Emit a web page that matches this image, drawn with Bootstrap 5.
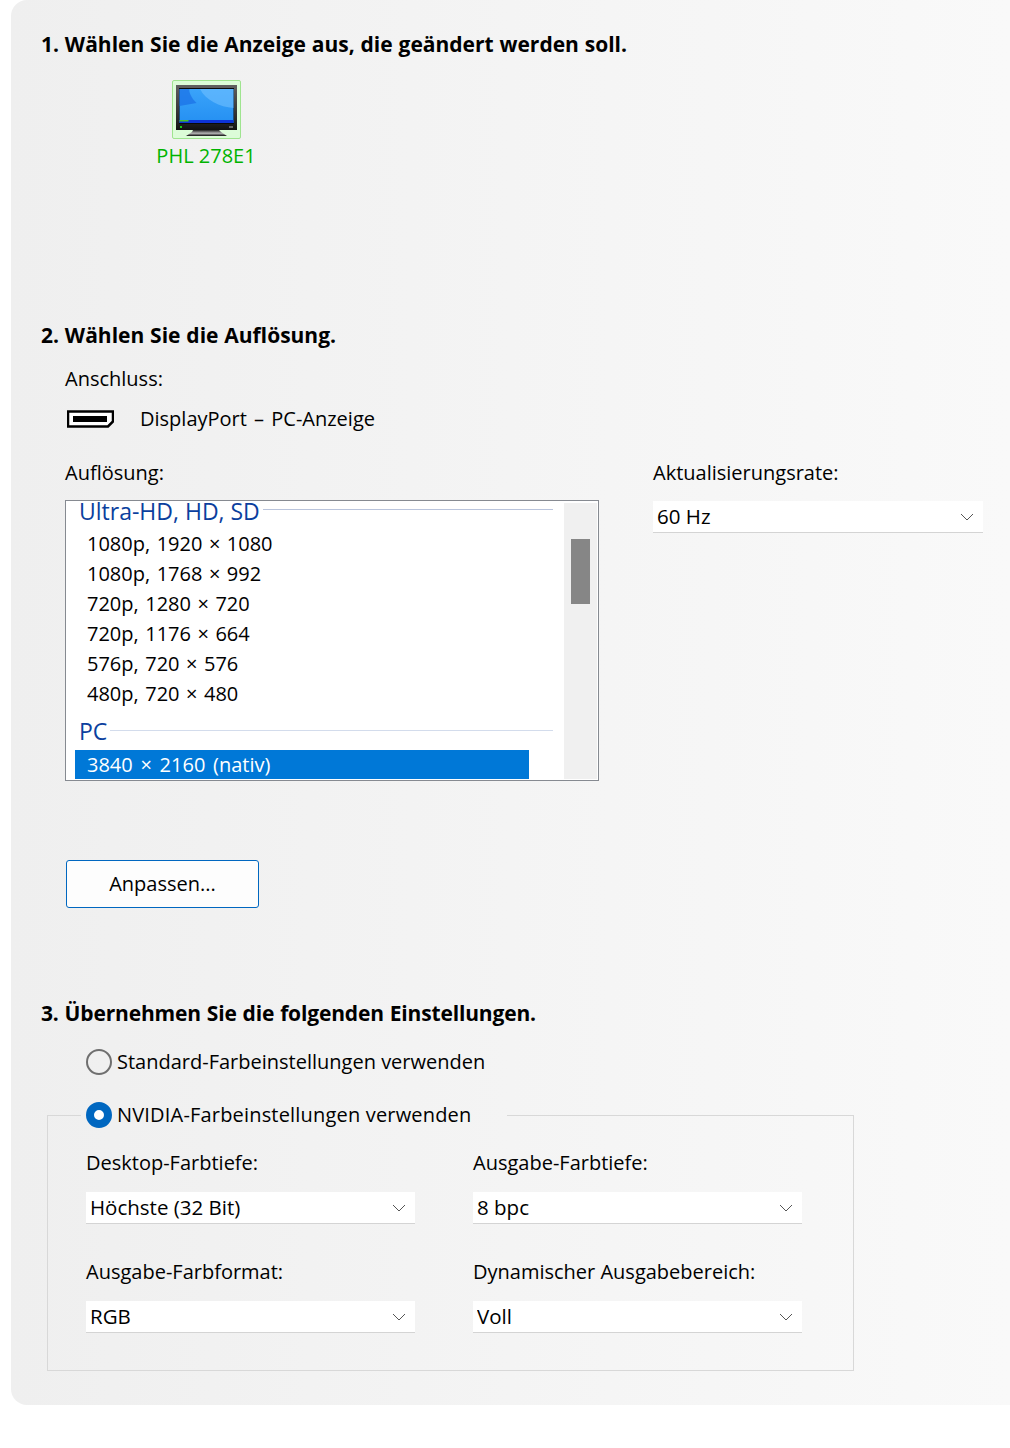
<!DOCTYPE html>
<html lang="de">
<head>
<meta charset="utf-8">
<title>Auflösung ändern</title>
<link href="https://cdn.jsdelivr.net/npm/bootstrap@5.3.0/dist/css/bootstrap.min.css" rel="stylesheet">
<style>
:root { --ink:#000; }
html, body { background:#fff; }
body { font-family:"Open Sans","Noto Sans","Liberation Sans",sans-serif; font-size:20px; color:var(--ink); min-height:1448px; }
.pane { margin-left:11px; height:1405px; padding:29px 0 0 30px; border-radius:16px 0 0 16px; background:linear-gradient(to right,#efefef,#f9f9f9); }
.step-title { font-size:21px; font-weight:700; line-height:30px; margin:0; word-spacing:.4px; }
.step-title.tight { letter-spacing:-.16px; word-spacing:.6px; }
.tile-wrap { width:100px; margin:21px 0 0 115px; text-align:center; }
.tile { width:69px; height:59px; margin:0 auto; border:1px solid #9fe48f; border-radius:2px; background:#dcfcd8; display:flex; justify-content:center; }
.tile svg { display:block; margin-top:4px; }
.tile-name { color:#00b400; line-height:30px; margin-top:2px; white-space:nowrap; }
.s2 { margin-top:149px; }
.indent { margin-left:24px; }
.lbl { line-height:30px; }
.port-head { margin-top:14px; }
.port { height:30px; margin-top:10px; }
.port svg { margin:0 26px 0 2px; }
.port span { word-spacing:2px; }
.columns { margin-top:24px; }
.res-col { width:534px; margin-right:54px; }
.rate-col { width:330px; }
.listbox { height:281px; margin-top:12px; background:#fff; border:1px solid #868a91; position:relative; }
.group-row { height:20px; line-height:20px; font-size:23px; color:#0b3f9e; padding-left:13px; display:flex; align-items:center; gap:3px; width:487px; }
.group-row::after { content:""; flex:1; height:1px; margin-bottom:4px; background:#b9c4dc; }
.opt { height:30px; line-height:30px; padding-left:21px; white-space:nowrap; word-spacing:1.300px; }
.opt-list { padding-top:8px; }
.pc-row { margin-top:12px; }
.pc-row::after { margin-bottom:2px; background:#d3dcec; }
.sel-row { background:#0078d7; color:#fff; width:454px; margin-left:9px; padding-left:12px; height:29px; line-height:29px; margin-top:9px; word-spacing:2.500px; }
.sbar { position:absolute; top:2px; bottom:1px; right:1px; width:33px; background:#f0f0f0; }
.sthumb { position:absolute; left:7px; top:36px; width:19px; height:65px; background:#868686; }
.win-select { height:32px; padding:0 0 0 4px; margin-top:13px; border:0; border-bottom:1px solid #d4d4d4; border-radius:0; font-size:20.5px; color:var(--ink); line-height:31px;
  background-color:#fff; background-position:right 9px center; background-size:14px 8px; background-repeat:no-repeat;
  background-image:url("data:image/svg+xml,%3csvg xmlns='http://www.w3.org/2000/svg' viewBox='0 0 14 8'%3e%3cpath fill='none' stroke='%23555' stroke-width='1' d='M1 1l6 6 6-6'/%3e%3c/svg%3e"); }
.win-select:focus { box-shadow:none; }
.adjust { width:193px; height:48px; margin:79px 0 0 1px; padding:0; display:block; font-size:20px; color:var(--ink); background:#fdfdfd; border:1px solid #0067c0; border-radius:3px; }
.s3 { margin-top:90px; }
.radio-line { display:flex; align-items:center; gap:5px; line-height:26px; margin:0; }
.radio-line .form-check-input { width:26px; height:26px; margin:0; flex:none; background:transparent; border:2px solid #6f6f6f; }
.radio-line .form-check-input:checked { background:#fff; border:8px solid #0067c0; }
.first-radio { margin:21px 0 0 45px; }
.groupbox { width:807px; height:269px; margin:27px 0 0 6px; padding:0 0 0 38px; border:1px solid #d8d8d8; min-width:0; }
.groupbox legend { float:none; width:auto; margin:0 0 0 -5px; padding:0 36px 0 5px; font-size:20px; line-height:26px; }
.groupbox legend span { letter-spacing:.18px; }
.fields { gap:0 58px; display:grid; grid-template-columns:329px 329px; }
.fields .lbl { margin-top:20px; }
.fields .win-select { margin-top:14px; }
.cell + .cell + .cell .lbl { margin-top:33px; }
</style>
</head>
<body>
<main class="pane">
  <section>
    <h2 class="step-title">1. Wählen Sie die Anzeige aus, die geändert werden soll.</h2>
    <div class="tile-wrap">
      <div class="tile">
        <svg width="61" height="52" viewBox="0 0 61 52" aria-label="Monitor">
          <defs>
            <linearGradient id="sc" x1="0" y1="0" x2="0" y2="1"><stop offset="0" stop-color="#3aa3fa"/><stop offset="1" stop-color="#2590f2"/></linearGradient>
            <linearGradient id="bz" x1="0" y1="0" x2="0" y2="1"><stop offset="0" stop-color="#606060"/><stop offset=".75" stop-color="#2a2a2a"/><stop offset="1" stop-color="#101010"/></linearGradient>
            <linearGradient id="ft" x1="0" y1="0" x2="0" y2="1"><stop offset="0" stop-color="#222"/><stop offset=".55" stop-color="#b5b5b5"/><stop offset="1" stop-color="#0a0a0a"/></linearGradient>
          </defs>
          <rect x="0" y="0" width="61" height="45" fill="url(#bz)"/>
          <rect x="3" y="3" width="55" height="36" fill="#0a0a0a"/>
          <rect x="3.500" y="4" width="54" height="34" fill="url(#sc)"/>
          <path d="M3.500 4h10c-1 3 2 9 7 14l-17 3z" fill="#1a6fe6" opacity=".7"/>
          <path d="M24 4h33.500v19c-14-1-28-8-33.500-19z" fill="#6fc0ff" opacity=".6"/>
          <rect x="3.500" y="35" width="54" height="3" fill="#0d33d6"/>
          <rect x="3.500" y="35" width="9" height="1.500" fill="#49c02c"/>
          <rect x="4" y="41" width="2" height="2" fill="#19c819"/>
          <rect x="53" y="41" width="4" height="2" fill="#666"/>
          <path d="M17 45h26l2 2 6 4H10l6-4z" fill="url(#ft)"/>
        </svg>
      </div>
      <div class="tile-name">PHL 278E1</div>
    </div>
  </section>

  <section class="s2">
    <h2 class="step-title">2. Wählen Sie die Auflösung.</h2>
    <div class="indent">
      <div class="lbl port-head">Anschluss:</div>
      <div class="port d-flex align-items-center">
        <svg width="47" height="18" viewBox="0 0 47 18" aria-label="DisplayPort"><path d="M1 1.500h45v10l-5 5H1z" fill="#fff" stroke="#000" stroke-width="2.500"/><rect x="6" y="6" width="34" height="6" fill="#000"/></svg>
        <span>DisplayPort – PC-Anzeige</span>
      </div>
      <div class="columns d-flex">
        <div class="res-col">
          <div class="lbl">Auflösung:</div>
          <div class="listbox">
            <div class="group-row">Ultra-HD, HD, SD</div>
            <div class="opt-list">
              <div class="opt">1080p, 1920 × 1080</div>
              <div class="opt">1080p, 1768 × 992</div>
              <div class="opt">720p, 1280 × 720</div>
              <div class="opt">720p, 1176 × 664</div>
              <div class="opt">576p, 720 × 576</div>
              <div class="opt">480p, 720 × 480</div>
            </div>
            <div class="group-row pc-row">PC</div>
            <div class="sel-row">3840 × 2160 (nativ)</div>
            <div class="sbar"><div class="sthumb"></div></div>
          </div>
        </div>
        <div class="rate-col">
          <div class="lbl">Aktualisierungsrate:</div>
          <select class="form-select win-select" aria-label="Aktualisierungsrate"><option>60 Hz</option></select>
        </div>
      </div>
      <button type="button" class="btn adjust">Anpassen...</button>
    </div>
  </section>

  <section class="s3">
    <h2 class="step-title tight">3. Übernehmen Sie die folgenden Einstellungen.</h2>
    <label class="radio-line first-radio"><input class="form-check-input" type="radio" name="farbe"><span>Standard-Farbeinstellungen verwenden</span></label>
    <fieldset class="groupbox">
      <legend><label class="radio-line"><input class="form-check-input" type="radio" name="farbe" checked><span>NVIDIA-Farbeinstellungen verwenden</span></label></legend>
      <div class="fields">
        <div class="cell"><div class="lbl">Desktop-Farbtiefe:</div><select class="form-select win-select" aria-label="Desktop-Farbtiefe"><option>Höchste (32 Bit)</option></select></div>
        <div class="cell"><div class="lbl">Ausgabe-Farbtiefe:</div><select class="form-select win-select" aria-label="Ausgabe-Farbtiefe"><option>8 bpc</option></select></div>
        <div class="cell"><div class="lbl">Ausgabe-Farbformat:</div><select class="form-select win-select" aria-label="Ausgabe-Farbformat"><option>RGB</option></select></div>
        <div class="cell"><div class="lbl">Dynamischer Ausgabebereich:</div><select class="form-select win-select" aria-label="Dynamischer Ausgabebereich"><option>Voll</option></select></div>
      </div>
    </fieldset>
  </section>
</main>
<script src="https://cdn.jsdelivr.net/npm/bootstrap@5.3.0/dist/js/bootstrap.bundle.min.js"></script>
</body>
</html>
